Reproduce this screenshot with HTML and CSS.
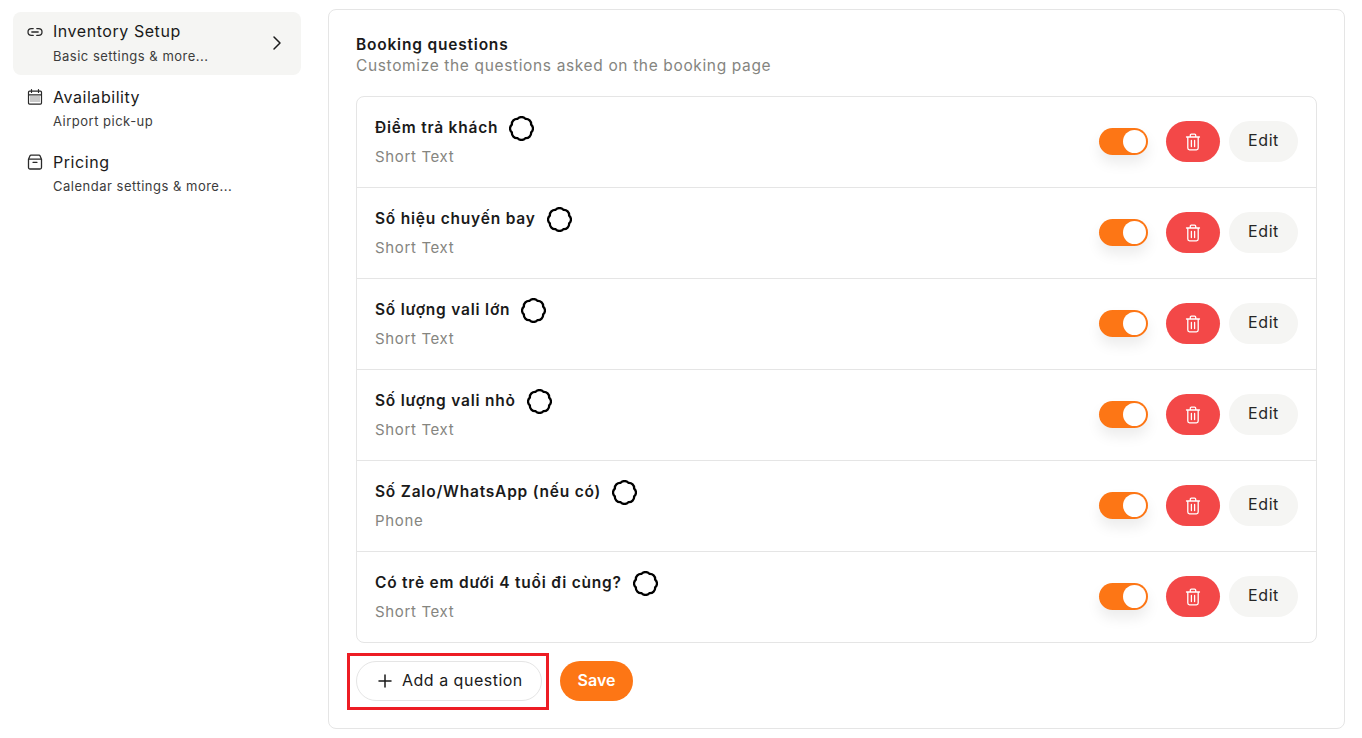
FILE: index.html
```html
<!DOCTYPE html>
<html lang="vi">
<head>
<meta charset="utf-8">
<title>Booking questions</title>
<link rel="stylesheet" href="styles.css">
</head>
<body>
<svg class="defs" width="0" height="0" aria-hidden="true">
  <symbol id="blob" viewBox="0 0 24 24"><path d="M8.17 2.76A5 5 0 0 1 15.83 2.76 5 5 0 0 1 21.24 8.17 5 5 0 0 1 21.24 15.83 5 5 0 0 1 15.83 21.24 5 5 0 0 1 8.17 21.24 5 5 0 0 1 2.76 15.83 5 5 0 0 1 2.76 8.17 5 5 0 0 1 8.17 2.76Z" fill="none" stroke="currentColor" stroke-width="2.200"/></symbol>
  <symbol id="trash" viewBox="0 0 16 18"><path d="M1.500 4h13M5.300 4V2.200c0-.6.4-1 1-1h3.400c.6 0 1 .4 1 1V4M2.800 4v11c0 1 .7 1.800 1.700 1.800h7c1 0 1.700-.8 1.700-1.800V4M6.400 7.500v6M9.600 7.500v6" fill="none" stroke="currentColor" stroke-width="1.300" stroke-linecap="round" stroke-linejoin="round"/></symbol>
</svg>
<div class="page">
  <nav class="side">
    <a class="nav-item active">
      <svg class="nav-icon" viewBox="0 0 18 18"><path d="M7.200 5.600H5.400a3.400 3.400 0 0 0 0 6.800h1.800M10.800 5.600h1.800a3.400 3.400 0 0 1 0 6.800h-1.800M5.800 9h6.400" fill="none" stroke="currentColor" stroke-width="1.300" stroke-linecap="round"/></svg>
      <span class="nav-text"><span class="nav-title">Inventory Setup</span><span class="nav-sub">Basic settings &amp; more...</span></span>
      <svg class="chev" viewBox="0 0 12 16"><path d="M3 2l6 6-6 6" fill="none" stroke="currentColor" stroke-width="1.500" stroke-linecap="round" stroke-linejoin="round"/></svg>
    </a>
    <a class="nav-item">
      <svg class="nav-icon" viewBox="0 0 18 18"><path d="M2.500 6.800h13M5.500 1.500v3M12.500 1.500v3M3.500 3.200h11c.6 0 1 .4 1 1v10.900c0 .6-.4 1-1 1h-11c-.6 0-1-.4-1-1V4.200c0-.6.4-1 1-1Z" fill="none" stroke="currentColor" stroke-width="1.200" stroke-linecap="round"/><path d="M4.500 9h9M4.500 11h9M4.500 13h9" fill="none" stroke="currentColor" stroke-width="1.100" stroke-dasharray="1 1"/></svg>
      <span class="nav-text"><span class="nav-title">Availability</span><span class="nav-sub">Airport pick-up</span></span>
    </a>
    <a class="nav-item">
      <svg class="nav-icon" viewBox="0 0 18 18"><path d="M2.500 6.200 4 2.700c.2-.4.500-.6 1-.6h8c.5 0 .8.200 1 .6l1.500 3.500v8.300c0 .9-.6 1.500-1.500 1.500H4c-.9 0-1.500-.6-1.500-1.500ZM2.500 6.200h13M7 9.300h4" fill="none" stroke="currentColor" stroke-width="1.300" stroke-linecap="round" stroke-linejoin="round"/></svg>
      <span class="nav-text"><span class="nav-title">Pricing</span><span class="nav-sub">Calendar settings &amp; more...</span></span>
    </a>
  </nav>

  <main class="card">
    <h1 class="heading">Booking questions</h1>
    <p class="lead">Customize the questions asked on the booking page</p>

    <ul class="list">
      <li class="row">
        <div class="row-text"><div class="q"><span>Điểm trả khách</span><svg class="blob"><use href="#blob"/></svg></div><div class="type">Short Text</div></div>
        <span class="toggle"><span class="knob"></span></span>
        <button class="btn-del"><svg class="trash"><use href="#trash"/></svg></button>
        <button class="btn-edit">Edit</button>
      </li>
      <li class="row">
        <div class="row-text"><div class="q"><span>Số hiệu chuyến bay</span><svg class="blob"><use href="#blob"/></svg></div><div class="type">Short Text</div></div>
        <span class="toggle"><span class="knob"></span></span>
        <button class="btn-del"><svg class="trash"><use href="#trash"/></svg></button>
        <button class="btn-edit">Edit</button>
      </li>
      <li class="row">
        <div class="row-text"><div class="q"><span>Số lượng vali lớn</span><svg class="blob"><use href="#blob"/></svg></div><div class="type">Short Text</div></div>
        <span class="toggle"><span class="knob"></span></span>
        <button class="btn-del"><svg class="trash"><use href="#trash"/></svg></button>
        <button class="btn-edit">Edit</button>
      </li>
      <li class="row">
        <div class="row-text"><div class="q"><span>Số lượng vali nhỏ</span><svg class="blob"><use href="#blob"/></svg></div><div class="type">Short Text</div></div>
        <span class="toggle"><span class="knob"></span></span>
        <button class="btn-del"><svg class="trash"><use href="#trash"/></svg></button>
        <button class="btn-edit">Edit</button>
      </li>
      <li class="row">
        <div class="row-text"><div class="q"><span>Số Zalo/WhatsApp (nếu có)</span><svg class="blob"><use href="#blob"/></svg></div><div class="type">Phone</div></div>
        <span class="toggle"><span class="knob"></span></span>
        <button class="btn-del"><svg class="trash"><use href="#trash"/></svg></button>
        <button class="btn-edit">Edit</button>
      </li>
      <li class="row">
        <div class="row-text"><div class="q"><span>Có trẻ em dưới 4 tuổi đi cùng?</span><svg class="blob"><use href="#blob"/></svg></div><div class="type">Short Text</div></div>
        <span class="toggle"><span class="knob"></span></span>
        <button class="btn-del"><svg class="trash"><use href="#trash"/></svg></button>
        <button class="btn-edit">Edit</button>
      </li>
    </ul>

    <div class="actions">
      <button class="btn-add">
        <svg class="plus" viewBox="0 0 14 14"><path d="M7 1v12M1 7h12" fill="none" stroke="currentColor" stroke-width="1.500" stroke-linecap="round"/></svg>
        Add a question
        <span class="highlight"></span>
      </button>
      <button class="btn-save">Save</button>
    </div>
  </main>
</div>
</body>
</html>
```
FILE: styles.css
```css
* { box-sizing: border-box; }
html, body { margin: 0; padding: 0; height: 100%; }
body {
  background: #fff;
  color: #1a1a1a;
  font-family: Inter, "Noto Sans", "Liberation Sans", sans-serif;
  overflow: hidden;
}
.defs { position: absolute; }
.page {
  display: flex;
  align-items: flex-start;
  padding: 9px 17px 9px 13px;
  gap: 27px;
}
.side {
  width: 288px;
  flex: none;
  padding-top: 3px;
  display: flex;
  flex-direction: column;
  gap: 2px;
}
.nav-item {
  display: flex;
  align-items: flex-start;
  height: 63px;
  padding: 10px 18px 0 13px;
  border-radius: 8px;
  color: #1a1a1a;
}
.nav-item.active { background: #f5f5f3; padding-top: 9px; }
.nav-item.active .nav-sub { margin-top: 6px; }
.nav-item.active .nav-icon { margin-top: 2px; }
.nav-item.active .chev { margin-top: 14px; }
.nav-icon { width: 18px; height: 18px; flex: none; margin: 1px 9px 0 0; color: #2a2a2a; }
.nav-text { display: flex; flex-direction: column; flex: 1; }
.nav-title { font-size: 16px; line-height: 20px; letter-spacing: .55px; }
.nav-sub { font-size: 13px; line-height: 18px; margin-top: 5px; color: #3c3c3c; letter-spacing: .5px; }
.chev { width: 12px; height: 16px; margin-top: 13px; color: #1a1a1a; }

.card {
  flex: 1;
  height: 720px;
  border: 1px solid #e5e5e5;
  border-radius: 8px;
  padding: 24px 27px 0;
}
.heading { margin: 0; font-size: 15.500px; line-height: 21px; font-weight: 600; letter-spacing: .8px; }
.lead { margin: 0; font-size: 15.500px; line-height: 21px; color: #85857f; letter-spacing: .64px; }
.list {
  list-style: none;
  margin: 20px 0 0;
  padding: 0;
  border: 1px solid #e5e5e5;
  border-radius: 8px;
}
.row {
  display: flex;
  align-items: center;
  height: 91px;
  padding: 0 18px 2px;
  border-top: 1px solid #e5e5e5;
}
.row:first-child { border-top: 0; height: 90px; }
.row-text { flex: 1; padding-bottom: 2px; }
.q { display: flex; align-items: center; gap: 11px; font-size: 15.500px; line-height: 25px; font-weight: 600; letter-spacing: .78px; }
.blob { width: 25px; height: 25px; color: #000; flex: none; margin-top: 2px; }
.type { margin-top: 6px; font-size: 15px; line-height: 20px; color: #85857f; letter-spacing: .65px; }

.toggle {
  display: block;
  width: 49px;
  height: 27px;
  border-radius: 14px;
  background: #fd7615;
  padding: 2px;
  margin: 1px 18px 0 0;
  box-shadow: 0 8px 14px rgba(0, 0, 0, .08);
}
.knob { display: block; width: 23px; height: 23px; margin-left: 22px; border-radius: 50%; background: #fff; }
button { font-family: inherit; border: 0; padding: 0; cursor: pointer; }
.btn-del {
  width: 54px;
  height: 41px;
  border-radius: 21px;
  background: #f34848;
  color: #fff;
  margin-right: 9px;
  display: flex;
  align-items: center;
  justify-content: center;
}
.trash { width: 16px; height: 18px; margin-top: 1px; }
.btn-edit {
  width: 69px;
  height: 41px;
  padding-bottom: 2px;
  border-radius: 21px;
  background: #f5f5f3;
  color: #262626;
  font-size: 16px;
  letter-spacing: .6px;
}
.actions { display: flex; gap: 18px; margin-top: 18px; }
.btn-add {
  position: relative;
  width: 186px;
  height: 40px;
  display: flex;
  align-items: center;
  padding: 0 0 2px 21px;
  background: #fff;
  border: 1px solid #e5e5e5;
  border-radius: 20px;
  color: #1a1a1a;
  font-size: 16px;
  letter-spacing: .5px;
}
.plus { width: 14px; height: 14px; margin: 2px 10px 0 0; }
.highlight {
  position: absolute;
  left: -10px;
  top: -9px;
  width: 202px;
  height: 57px;
  border: 3px solid #ed1c24;
  pointer-events: none;
}
.btn-save {
  width: 73px;
  height: 40px;
  padding-bottom: 2px;
  border-radius: 20px;
  background: #fd7615;
  color: #fff;
  font-size: 16px;
  font-weight: 600;
}
```
